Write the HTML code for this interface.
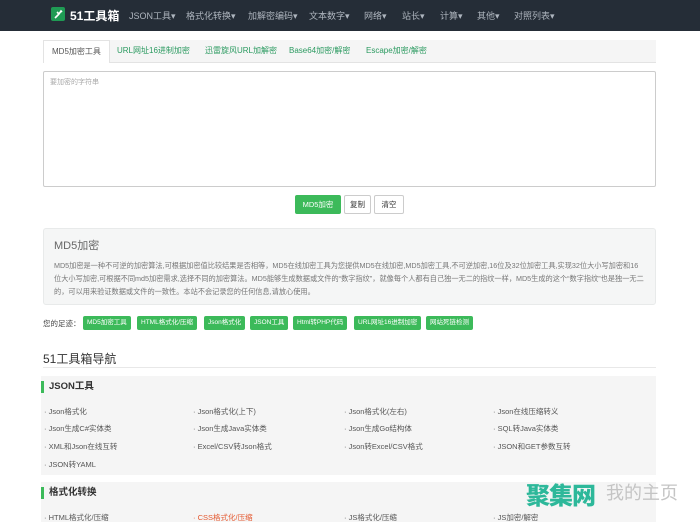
<!DOCTYPE html>
<html><head><meta charset="utf-8"><style>
*{box-sizing:border-box;margin:0;padding:0}
body{width:700px;height:517px;overflow:hidden;background:#fff;font-family:"Liberation Sans","Noto Sans CJK SC",sans-serif;font-size:8px;color:#555;position:relative}
.nav{height:31px;background:#252d37;color:#aeb5be;position:relative}
.logo{position:absolute;left:51px;top:7px;width:14px;height:14px;background:#1f9a54;border-radius:2px}
.brand{position:absolute;left:70px;top:7px;color:#fff;font-weight:bold;font-size:12px}
.nav span.i{position:absolute;top:9px;font-size:9px}
.tabs{position:absolute;left:43px;top:40px;width:613px;height:23px;background:#f5f5f5;border-bottom:1px solid #e3e3e3}
.tab{position:absolute;top:0;height:23px;line-height:22px;font-size:8px;color:#2b9a60}
.tab.a{background:#fff;color:#555;border:1px solid #e3e3e3;border-bottom:none;padding:0 8px;left:0}
.ta{position:absolute;left:43px;top:71px;width:613px;height:116px;border:1px solid #ccc;border-radius:2px;padding:5px 6px;color:#aaa;font-size:7px}
.btn{position:absolute;top:195px;height:19px;line-height:17px;font-size:7.5px;border:1px solid #ccc;border-radius:2px;text-align:center;color:#333;background:#fff}
.info{position:absolute;left:43px;top:228px;width:613px;height:77px;background:#f5f6f6;border:1px solid #e8eaea;border-radius:3px;padding:8px 10px}
.info h3{font-weight:normal;font-size:11px;color:#666;margin-bottom:6px}
.info p{font-size:7.2px;line-height:13px;color:#777}
.tagl{position:absolute;left:43px;top:318px;font-size:7.5px;color:#444}
.tag{position:absolute;top:316px;height:14px;line-height:14px;background:#3cba5a;color:#fff;font-size:6.5px;padding:0 4px;border-radius:2px}
.h2{position:absolute;left:43px;top:350px;font-size:12px;color:#333}
.hr{position:absolute;left:43px;top:367px;width:613px;border-top:1px solid #e8e8e8}
.sec{position:absolute;left:41px;width:615px;background:#f5f5f5}
.st{position:absolute;left:0;font-size:9.5px;font-weight:bold;color:#333;border-left:3px solid #3cba5a;padding-left:5px;height:12px;line-height:12px}
.li{position:absolute;font-size:7.5px;color:#555}
.wm{position:absolute;left:526px;top:476px;font-size:24px;font-weight:900;color:#2db89a;letter-spacing:-1px}
.wm2{position:absolute;left:606px;top:479px;font-size:18px;color:#c4c4c4}
</style></head><body>
<div class="nav">
<div class="logo"><svg width="14" height="14" viewBox="0 0 14 14"><path d="M4 11 L8 7 M8 7 L10 4 L11 5 M8 7 L6 5" stroke="#fff" stroke-width="1.6" fill="none"/></svg></div>
<div class="brand">51工具箱</div>
<span class="i" style="left:129px">JSON工具▾</span>
<span class="i" style="left:186px">格式化转换▾</span>
<span class="i" style="left:248px">加解密编码▾</span>
<span class="i" style="left:309px">文本数字▾</span>
<span class="i" style="left:364px">网络▾</span>
<span class="i" style="left:402px">站长▾</span>
<span class="i" style="left:440px">计算▾</span>
<span class="i" style="left:477px">其他▾</span>
<span class="i" style="left:514px">对照列表▾</span>
</div>
<div class="tabs">
<div class="tab a">MD5加密工具</div>
<div class="tab" style="left:74px">URL网址16进制加密</div>
<div class="tab" style="left:162px">迅雷旋风URL加解密</div>
<div class="tab" style="left:246px">Base64加密/解密</div>
<div class="tab" style="left:323px">Escape加密/解密</div>
</div>
<div class="ta">要加密的字符串</div>
<div class="btn" style="left:295px;width:46px;background:#3cba5a;border-color:#3cba5a;color:#fff">MD5加密</div>
<div class="btn" style="left:344px;width:27px">复制</div>
<div class="btn" style="left:374px;width:30px">清空</div>
<div class="info"><h3>MD5加密</h3>
<p>MD5加密是一种不可逆的加密算法,可根据加密值比较结果是否相等，MD5在线加密工具为您提供MD5在线加密,MD5加密工具,不可逆加密,16位及32位加密工具,实现32位大小写加密和16位大小写加密,可根据不同md5加密需求,选择不同的加密算法。MD5能够生成数据或文件的“数字指纹”，就像每个人都有自己独一无二的指纹一样，MD5生成的这个“数字指纹”也是独一无二的，可以用来验证数据或文件的一致性。本站不会记录您的任何信息,请放心使用。</p></div>
<div class="tagl">您的足迹：</div>
<div class="tag" style="left:83px">MD5加密工具</div>
<div class="tag" style="left:137px">HTML格式化/压缩</div>
<div class="tag" style="left:204px">Json格式化</div>
<div class="tag" style="left:250px">JSON工具</div>
<div class="tag" style="left:293px">Html转PHP代码</div>
<div class="tag" style="left:354px">URL网址16进制加密</div>
<div class="tag" style="left:426px">网站死链检测</div>
<div class="h2">51工具箱导航</div>
<div class="hr"></div>
<div class="sec" style="top:376px;height:99px">
<div class="st" style="top:5px">JSON工具</div>
<div class="li" style="left:3px;top:30px">· Json格式化</div><div class="li" style="left:152px;top:30px">· Json格式化(上下)</div><div class="li" style="left:303px;top:30px">· Json格式化(左右)</div><div class="li" style="left:452px;top:30px">· Json在线压缩转义</div>
<div class="li" style="left:3px;top:47px">· Json生成C#实体类</div><div class="li" style="left:152px;top:47px">· Json生成Java实体类</div><div class="li" style="left:303px;top:47px">· Json生成Go结构体</div><div class="li" style="left:452px;top:47px">· SQL转Java实体类</div>
<div class="li" style="left:3px;top:65px">· XML和Json在线互转</div><div class="li" style="left:152px;top:65px">· Excel/CSV转Json格式</div><div class="li" style="left:303px;top:65px">· Json转Excel/CSV格式</div><div class="li" style="left:452px;top:65px">· JSON和GET参数互转</div>
<div class="li" style="left:3px;top:83px">· JSON转YAML</div>
</div>
<div class="sec" style="top:482px;height:40px">
<div class="st" style="top:5px">格式化转换</div>
<div class="li" style="left:3px;top:30px">· HTML格式化/压缩</div><div class="li" style="left:152px;top:30px;color:#e4572e">· CSS格式化/压缩</div><div class="li" style="left:303px;top:30px">· JS格式化/压缩</div><div class="li" style="left:452px;top:30px">· JS加密/解密</div>
</div>
<div class="wm">聚集网</div><div class="wm2">我的主页</div>
</body></html>
